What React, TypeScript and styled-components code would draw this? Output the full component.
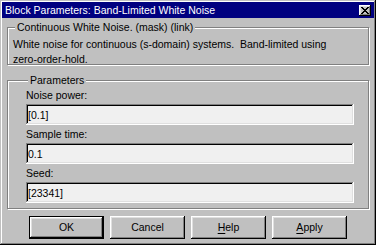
import React from 'react';
import styled, { createGlobalStyle, css } from 'styled-components';

const GlobalStyle = createGlobalStyle`
  body {
    margin: 0;
    font-family: "Liberation Sans", Arial, sans-serif;
    font-size: 10.5px;
    line-height: 13px;
    color: #000;
  }
`;

const raised = css`
  box-shadow:
    inset -1px -1px #000,
    inset 1px 1px #fff,
    inset -2px -2px #808080,
    inset 2px 2px #dfdfdf;
`;

const Window = styled.div`
  width: 376px;
  height: 245px;
  box-sizing: border-box;
  padding: 2px;
  display: flex;
  flex-direction: column;
  background: #c0c0c0;
  box-shadow:
    inset -1px -1px #000,
    inset 1px 1px #c0c0c0,
    inset -2px -2px #808080,
    inset 2px 2px #fff;
`;

const TitleBar = styled.div`
  height: 16px;
  padding: 0 3px;
  display: flex;
  align-items: center;
  justify-content: space-between;
  background: #000080;
  color: #fff;
  white-space: nowrap;
`;

const CloseButton = styled.div`
  width: 12px;
  height: 11px;
  display: grid;
  place-items: center;
  background: #c0c0c0;
  ${raised}
`;

const Content = styled.div`
  padding: 3px 5px 0;
  display: flex;
  flex-direction: column;
`;

const GroupBox = styled.fieldset<{ $pad: string }>`
  margin: 0;
  padding: ${(p) => p.$pad};
  min-width: 0;
  border: 1px solid #808080;
  box-shadow:
    inset 1px 1px #fff,
    1px 1px #fff;

  & + & {
    margin-top: 9px;
  }
`;

const Legend = styled.legend`
  margin-left: 2px;
  padding: 0 2px;
  background: #c0c0c0;
`;

const Description = styled.p`
  margin: 0 0 -3px;
  line-height: 15px;
  white-space: nowrap;
`;

const Field = styled.div`
  display: flex;
  flex-direction: column;

  & + & {
    margin-top: 3px;
  }
`;

const Label = styled.label`
  margin-bottom: 2px;
`;

const Edit = styled.input`
  height: 21px;
  width: 100%;
  box-sizing: border-box;
  margin: 0;
  padding: 0 2px;
  border: none;
  outline: none;
  font: inherit;
  color: #000;
  background: #f0f0f0;
  box-shadow:
    inset -1px -1px #fff,
    inset 1px 1px #808080,
    inset -2px -2px #dfdfdf,
    inset 2px 2px #000;
`;

const ButtonRow = styled.div`
  margin-top: 7px;
  display: flex;
  justify-content: center;
  gap: 6px;
`;

const Button = styled.button<{ $default?: boolean }>`
  width: 75px;
  height: 23px;
  box-sizing: border-box;
  margin: 0;
  padding: 0;
  border: ${(p) => (p.$default ? '1px solid #000' : 'none')};
  font: inherit;
  color: #000;
  background: #c0c0c0;
  ${raised}

  u {
    text-decoration-thickness: 1px;
    text-underline-offset: 2px;
  }
`;

const CloseGlyph = () => (
  <svg width="8" height="7" viewBox="0 0 8 7" shapeRendering="crispEdges">
    <path
      fill="#000"
      d="M0 0h2v1H0zM6 0h2v1H6zM1 1h2v1H1zM5 1h2v1H5zM2 2h4v1H2zM3 3h2v1H3zM2 4h4v1H2zM1 5h2v1H1zM5 5h2v1H5zM0 6h2v1H0zM6 6h2v1H6z"
    />
  </svg>
);

const params = [
  { label: 'Noise power:', value: '[0.1]' },
  { label: 'Sample time:', value: '0.1' },
  { label: 'Seed:', value: '[23341]' },
];

export default function App() {
  return (
    <>
      <GlobalStyle />
      <Window>
        <TitleBar>
          <span>Block Parameters: Band-Limited White Noise</span>
          <CloseButton>
            <CloseGlyph />
          </CloseButton>
        </TitleBar>
        <Content>
          <GroupBox $pad="3px 5px 0">
            <Legend>Continuous White Noise. (mask) (link)</Legend>
            <Description>
              White noise for continuous (s-domain) systems.&nbsp; Band-limited using
              <br />
              zero-order-hold.
            </Description>
          </GroupBox>
          <GroupBox $pad="2px 14px 5px 18px">
            <Legend>Parameters</Legend>
            {params.map((p) => (
              <Field key={p.label}>
                <Label>{p.label}</Label>
                <Edit readOnly defaultValue={p.value} />
              </Field>
            ))}
          </GroupBox>
          <ButtonRow>
            <Button $default>OK</Button>
            <Button>Cancel</Button>
            <Button>
              <u>H</u>elp
            </Button>
            <Button>
              <u>A</u>pply
            </Button>
          </ButtonRow>
        </Content>
      </Window>
    </>
  );
}
